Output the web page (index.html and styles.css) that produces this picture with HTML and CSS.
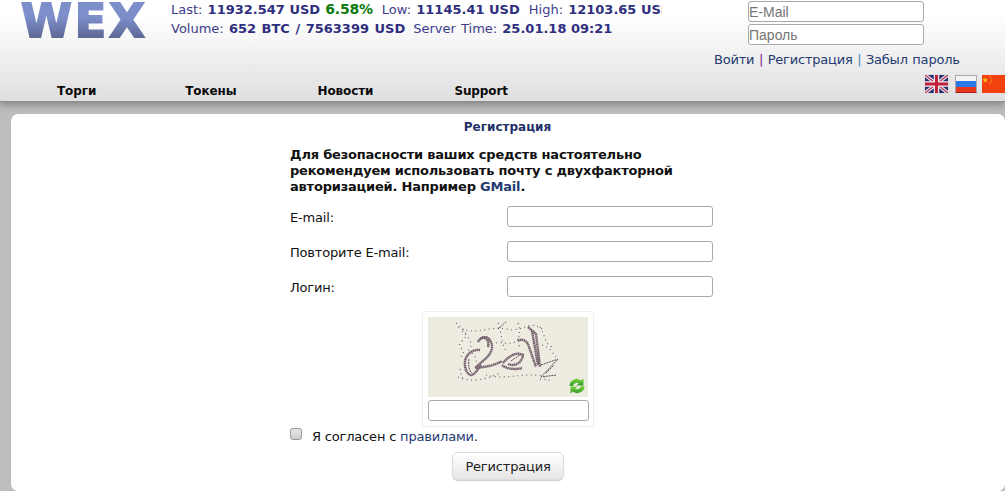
FILE: index.html
```html
<!DOCTYPE html>
<html lang="ru">
<head>
    <meta charset="UTF-8">
    <meta name="viewport" content="width=device-width, initial-scale=1.0">
    <title>WEX - Регистрация</title>
    <link rel="stylesheet" href="styles.css">
</head>
<body>
    <div class="header">
        <div class="header-top">
            <a class="logo" href="#">WEX</a>
            <div class="stats">
                <div class="stats-line"><span>Last: <b>11932.547 USD</b> <b class="up">6.58%</b></span><span class="stat">Low: <b>11145.41 USD</b></span><span class="stat">High: <b>12103.65 USD</b></span></div>
                <div class="stats-line"><span>Volume: <b class="volume">652 BTC / 7563399 USD</b></span><span class="stat stat-time">Server Time: <b>25.01.18 09:21</b></span></div>
            </div>
            <div class="login">
                <input class="login-input" type="text" placeholder="E-Mail">
                <input class="login-input" type="password" placeholder="Пароль">
                <div class="login-links">
                    <a href="#">Войти</a> <span class="sep-a">|</span> <a href="#">Регистрация</a> <span class="sep-b">|</span> <a href="#">Забыл пароль</a>
                </div>
            </div>
        </div>
        <div class="nav">
            <a class="nav-item nav-first" href="#">Торги</a>
            <a class="nav-item" href="#">Токены</a>
            <a class="nav-item" href="#">Новости</a>
            <a class="nav-item" href="#">Support</a>
            <div class="flags">
                <svg class="flag flag-en" viewBox="0 0 23 18">
                    <rect width="23" height="18" fill="#2b2f72"/>
                    <path d="M0 0L23 18M23 0L0 18" stroke="#e4e4ee" stroke-width="3.6"/>
                    <path d="M0 0L23 18M23 0L0 18" stroke="#b8324a" stroke-width="1.2"/>
                    <path d="M11.5 0V18M0 9H23" stroke="#eeeef2" stroke-width="5.4"/>
                    <path d="M11.5 0V18M0 9H23" stroke="#c2203a" stroke-width="3"/>
                </svg>
                <div class="flag flag-ru"></div>
                <svg class="flag flag-cn" viewBox="0 0 23 18">
                    <rect width="23" height="18" fill="#f3400f"/>
                    <path d="M3.2 2L4 4.2H6.2L4.5 5.5L5.1 7.6L3.2 6.4L1.4 7.6L2 5.5L.3 4.2H2.5Z" fill="#fcc21a"/>
                    <circle cx="8" cy="1.8" r=".7" fill="#fba51a"/>
                    <circle cx="9.6" cy="3.6" r=".7" fill="#fba51a"/>
                    <circle cx="9.6" cy="6" r=".7" fill="#fba51a"/>
                    <circle cx="8" cy="7.8" r=".7" fill="#fba51a"/>
                </svg>
            </div>
        </div>
    </div>

    <div class="card">
        <div class="card-title">Регистрация</div>
        <form class="reg-form">
            <p class="notice">Для безопасности ваших средств настоятельно рекомендуем использовать почту с двухфакторной авторизацией. Например <a href="#">GMail</a>.</p>
            <div class="form-row">
                <label>E-mail:</label>
                <input class="text-input" type="text">
            </div>
            <div class="form-row">
                <label>Повторите E-mail:</label>
                <input class="text-input" type="text">
            </div>
            <div class="form-row">
                <label>Логин:</label>
                <input class="text-input" type="text">
            </div>
            <div class="captcha">
                <div class="captcha-image">
                    <svg class="captcha-art" viewBox="0 0 160 80">
                        <g fill="none" stroke="#5d4757" stroke-width="2.4" stroke-dasharray="1.6 .4" opacity=".85">
                            <path d="M50 25C53 19 60 18 63 25C66 32 62 38 56 43L47 51C56 50 66 49 74 44"/>
                            <path d="M52 22C56 19 62 22 60 30"/>
                            <path d="M52 33C44 32 38 38 37 44C36 52 40 59 44 58C48 56 50 52 53 48"/>
                            <path d="M75 46C80 40 88 34 95 38C94 46 86 50 80 47M74 48C78 52 88 53 94 51"/>
                            <path d="M90 24C92 22 97 22 100 27L108 50"/>
                            <path d="M100 10L108 17L112 50M104 14L110 48"/>
                        </g>
                        <g fill="none" stroke="#5d4757" stroke-width="1" stroke-dasharray="2 .8">
                            <path d="M113 48L130 42L113 60L128 58M118 56L126 48"/>
                            <path d="M41 42C40 48 41 54 44 56M83 44L92 38"/>
                        </g>
                        <g fill="none" stroke="#6d5a68" stroke-width="1.1" stroke-dasharray="1 3.500">
                            <path d="M28 6C36 12 42 18 34 24S42 34 32 40"/>
                            <path d="M30 10C48 20 60 8 78 12S100 2 114 12"/>
                            <path d="M34 14C46 24 44 30 40 34"/>
                            <path d="M70 6C74 14 72 24 78 34"/>
                            <path d="M90 6C94 16 88 24 92 30"/>
                            <path d="M112 10C118 20 116 26 124 30"/>
                            <path d="M114 28C122 30 124 36 128 40"/>
                            <path d="M32 52C34 58 32 60 36 62"/>
                            <path d="M30 60C44 66 60 62 72 56"/>
                            <path d="M58 58C76 64 98 54 118 60"/>
                            <path d="M44 36C50 40 46 46 52 50"/>
                            <path d="M68 26C76 24 84 30 90 22"/>
                            <path d="M112 62C116 64 118 60 122 64"/>
                        </g>
                        <path d="M70 12L79 4" fill="none" stroke="#6d5a68" stroke-dasharray="2 1"/>
                    </svg>
                    <svg class="captcha-refresh" viewBox="0 0 16 16">
                        <defs>
                            <linearGradient id="refreshGreen" x1="0" y1="0" x2="0" y2="1">
                                <stop offset="0" stop-color="#7fd63a"/>
                                <stop offset="1" stop-color="#2f9a2a"/>
                            </linearGradient>
                        </defs>
                        <path d="M.5 8A7 7 0 0 1 12 2.600L14.500 .5V7.500H7.500L9.800 5.300A4 4 0 0 0 4 8Z" fill="url(#refreshGreen)"/>
                        <path d="M15.500 8A7 7 0 0 1 4 13.400L1.500 15.500V8.500H8.500L6.200 10.700A4 4 0 0 0 12 8Z" fill="url(#refreshGreen)"/>
                    </svg>
                </div>
                <input class="text-input captcha-input" type="text">
            </div>
            <div class="agree">
                <input class="agree-check" type="checkbox">
                <span>Я согласен с <a href="#">правилами</a>.</span>
            </div>
            <div class="submit-row">
                <button class="submit" type="button">Регистрация</button>
            </div>
        </form>
    </div>
</body>
</html>
```

FILE: styles.css
```css
html, body {
    height: 491px;
    overflow: hidden;
}
body {
    margin: 0;
    background-color: #bdbdbd;
    font-family: "DejaVu Sans", Verdana, sans-serif;
    font-size: 13px;
    color: #111;
}
a {
    color: #243a73;
    text-decoration: none;
}
input {
    box-sizing: border-box;
    font-family: "Liberation Sans", Arial, sans-serif;
    border: 1px solid #a9a9a9;
    border-radius: 3px;
    background: #fff;
    padding: 0 1px;
}
.header {
    height: 101px;
    box-sizing: border-box;
    background: linear-gradient(#ffffff 15%, #dfdfdf);
    box-shadow: 0 1px 0 #8f8f8f, 0 3px 8px #7a7a7a;
    display: flex;
    flex-direction: column;
    justify-content: space-between;
}
.header-top {
    display: flex;
    padding-top: 1px;
}
.logo {
    width: 149px;
    margin-left: 21px;
    height: 40px;
    font-weight: bold;
    font-size: 46px;
    line-height: 40px;
    letter-spacing: 3px;
    -webkit-text-stroke: 2px transparent;
    background: linear-gradient(#7d8fcb 40%, #5d6894 92%);
    -webkit-background-clip: text;
    background-clip: text;
    color: transparent;
}
.stats {
    width: 491px;
    margin-left: 1px;
    overflow: hidden;
    white-space: nowrap;
    color: #3d3d8c;
    word-spacing: 1px;
}
.stats-line {
    height: 20px;
    line-height: 16px;
}
.stat {
    margin-left: 9px;
}
.stat-time {
    margin-left: 8px;
}
.stats b {
    color: #2f2f80;
    word-spacing: 0;
}
.stats .volume {
    word-spacing: 1px;
}
.stats .up {
    color: #0c7a0c;
    font-size: 14px;
    letter-spacing: -0.2px;
}
.login {
    margin-left: 52px;
    width: 244px;
    display: flex;
    flex-direction: column;
    align-items: flex-start;
}
.login-input {
    width: 176px;
    height: 21px;
    margin-left: 34px;
    margin-bottom: 2px;
    font-size: 14px;
    padding: 0;
}
.login-input::placeholder {
    color: #757575;
}
.login-links {
    margin-top: 5px;
    white-space: nowrap;
    line-height: 16px;
    letter-spacing: -0.2px;
    word-spacing: 0.6px;
}
.sep-a {
    color: #7a1f80;
}
.sep-b {
    color: #3f80b8;
}
.nav {
    display: flex;
    gap: 81px;
    padding-left: 57px;
    height: 26px;
}
.nav-item {
    font-size: 12px;
    font-weight: bold;
    color: #0a0a0a;
    line-height: 18px;
    padding-top: 7px;
    letter-spacing: -0.1px;
}
.nav-first {
    margin-right: 8px;
}
.flags {
    margin-left: auto;
    display: flex;
    gap: 7px;
    height: 18px;
}
.flag {
    width: 23px;
    height: 18px;
    display: block;
}
.flag-en {
    box-shadow: 0 0 1px #aaa;
}
.flag-ru {
    width: 22px;
    box-sizing: border-box;
    background: linear-gradient(#f4f4f4 33%, #2a78e8 33%, #2a78e8 66%, #e8361e 66%);
    border: 1px solid #aaa;
    border-bottom-color: #a8201a;
}
.flag-cn {
    margin-left: -2px;
}
.card {
    margin: 13px 0 0 11px;
    height: 377px;
    background: #fff;
    border-radius: 7px;
    letter-spacing: -0.18px;
}
.card-title {
    text-align: center;
    font-size: 12px;
    font-weight: bold;
    color: #1f3068;
    padding-top: 6px;
    line-height: 15px;
    padding-right: 1px;
    letter-spacing: 0;
}
.reg-form {
    width: 423px;
    margin: 0 0 0 279px;
}
.notice {
    margin: 12px 0 11px;
    font-weight: bold;
    line-height: 16px;
    width: 400px;
    letter-spacing: -0.2px;
}
.form-row {
    display: flex;
    justify-content: space-between;
    align-items: center;
    height: 21px;
    margin-bottom: 14px;
}
.form-row label {
    padding-top: 1px;
}
.text-input {
    width: 206px;
    height: 21px;
}
.captcha {
    box-sizing: border-box;
    width: 172px;
    height: 116px;
    margin-left: 132px;
    padding: 5px;
    border: 1px solid #eee;
    border-radius: 3px;
}
.captcha-image {
    position: relative;
    width: 160px;
    height: 80px;
    background: #eeebe1;
}
.captcha-art {
    display: block;
    width: 160px;
    height: 80px;
}
.captcha-refresh {
    position: absolute;
    right: 3px;
    bottom: 3px;
    width: 16px;
    height: 16px;
}
.captcha-input {
    display: block;
    width: 161px;
    margin-top: 3px;
}
.agree {
    display: flex;
    align-items: center;
    height: 16px;
    margin-top: 1px;
}
.agree-check {
    appearance: none;
    width: 12px;
    height: 12px;
    margin: 0 10px 4px 0;
    padding: 0;
    background: linear-gradient(#e8e8e8, #cfcfcf);
    border: 1px solid #999;
    border-radius: 3px;
}
.submit-row {
    margin-top: 8px;
    margin-left: 162px;
}
.submit {
    width: 112px;
    height: 28px;
    font-family: "DejaVu Sans", Verdana, sans-serif;
    font-size: 13px;
    letter-spacing: -0.18px;
    color: #222;
    background: linear-gradient(#ffffff, #e6e6e6);
    border: 1px solid #ddd;
    border-radius: 6px;
    box-shadow: 0 1px 1px #ccc;
}
```
